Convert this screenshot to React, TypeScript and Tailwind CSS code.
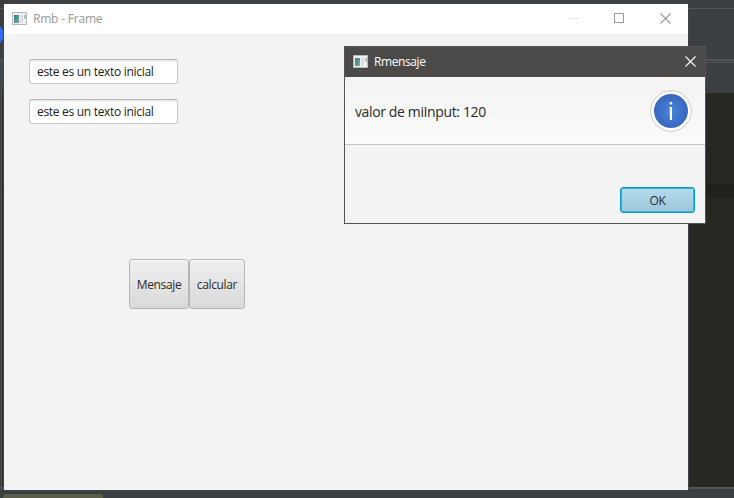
import React from "react";

function AppIcon() {
  return (
    <svg width="15" height="14" viewBox="0 0 15 14" className="shrink-0" shapeRendering="crispEdges">
      <defs>
        <linearGradient id="pane" x1="0" y1="0" x2="1" y2="1">
          <stop offset="0" stopColor="#3f7395" />
          <stop offset="0.55" stopColor="#4f9c8c" />
          <stop offset="1" stopColor="#74b98c" />
        </linearGradient>
      </defs>
      <rect width="15" height="13" fill="#b5b9bd" />
      <rect x="1" y="1" width="13" height="11" fill="#f1f1f3" />
      <rect x="2" y="3" width="5" height="8" fill="url(#pane)" />
      <rect x="8" y="3" width="3" height="8" fill="#dedee2" />
      <rect x="12" y="3" width="2" height="2" fill="#9cc4d4" />
      <rect x="12" y="5" width="2" height="2" fill="#a8d3ae" />
    </svg>
  );
}

function CloseIcon({ color }: { color: string }) {
  return (
    <svg width="11" height="11" viewBox="0 0 11 11" stroke={color} strokeWidth="1.1" className="block shrink-0">
      <path d="M.5 .5 10.5 10.5M10.5 .5 .5 10.5" />
    </svg>
  );
}

function TextField() {
  return (
    <div className="flex h-[25px] w-[149px] items-center rounded-[3px] border border-[#c8c8c8] border-t-[#b9b9b9] bg-white pl-[7px] text-[12px] tracking-[-0.3px] text-[#222] shadow-[inset_0_2px_2px_-1px_#ddd]">
      este es un texto inicial
    </div>
  );
}

function FrameButton({ label, width }: { label: string; width: string }) {
  return (
    <button
      className={`${width} flex h-[50px] items-center justify-center rounded-[3px] border border-[#b5b5b5] bg-linear-to-b from-[#efefef] to-[#d9d9d9] pt-[2px] text-[12px] tracking-[-0.35px] text-[#2b2b2b] shadow-[inset_0_1px_0_#f8f8f8]`}
    >
      {label}
    </button>
  );
}

function Editor() {
  return (
    <div className="flex h-[498px] flex-col bg-[#3c3f41]">
      <div className="h-[8px] shrink-0" />
      <div className="h-px shrink-0 bg-[#555]" />
      <div className="h-[50px] shrink-0" />
      <div className="h-[2px] shrink-0 bg-[#555]" />
      <div className="h-px shrink-0" />
      <div className="h-px shrink-0 bg-[#555]" />
      <div className="flex h-[30px] shrink-0">
        <div className="ml-[1px] w-px bg-[#555]" />
      </div>
      <div className="flex h-[394px] shrink-0">
        <div className="w-px bg-[#3c3f41]" />
        <div className="w-px bg-[#555]" />
        <div className="flex flex-1 flex-col bg-[#272822]">
          <div className="h-[90px]" />
          <div className="h-[15px] bg-[#20201e]" />
        </div>
      </div>
      <div className="h-[2px] shrink-0 bg-[#555]" />
      <div className="h-[5px] shrink-0" />
      <div className="ml-[3px] h-[4px] w-[100px] shrink-0 rounded-t-[3px] bg-[#5a5d4c]" />
    </div>
  );
}

function Dialog() {
  return (
    <div className="absolute left-[344px] top-[46px] flex h-[178px] w-[362px] flex-col border border-[#555453] bg-[#f3f3f3]">
      <div className="flex h-[30px] shrink-0 items-center bg-[#4c4a48] pl-[8px] pr-[9px] text-[12px] tracking-[-0.4px] text-white">
        <AppIcon />
        <span className="ml-[6px] flex-1">Rmensaje</span>
        <div className="pb-[2px]">
          <CloseIcon color="#fff" />
        </div>
      </div>
      <div className="flex h-[68px] shrink-0 items-center justify-between border-b border-[#c6c6c6] bg-linear-to-b from-[#f3f3f3] to-[#fbfbfb] pl-[10px] pr-[13px]">
        <span className="pt-[1px] text-[14px] tracking-[-0.37px] text-[#2b2b2b]">valor de miInput: 120</span>
        <svg width="42" height="42" viewBox="0 0 42 42">
          <defs>
            <radialGradient id="info">
              <stop offset="0" stopColor="#4688d8" />
              <stop offset="1" stopColor="#3966c0" />
            </radialGradient>
          </defs>
          <circle cx="21" cy="21" r="20.3" fill="#fff" stroke="#cacaca" />
          <circle cx="21" cy="21" r="17" fill="url(#info)" />
          <rect x="19.6" y="12" width="2.6" height="2.6" rx=".8" fill="#fff" />
          <path d="M19 17h3v13h-2.2V18H19z" fill="#fff" />
        </svg>
      </div>
      <div className="flex flex-1 items-end justify-end pb-[10px] pr-[10px]">
        <button className="flex h-[26px] w-[75px] items-center justify-center rounded-[3px] border border-[#039ed3] bg-linear-to-b from-[#b3dced] to-[#9cc5d7] pt-[1px] text-[12px] tracking-[-0.3px] text-[#2b2b2b] shadow-[inset_0_0_0_1px_#38b1da]">
          OK
        </button>
      </div>
    </div>
  );
}

export default function App() {
  return (
    <main className="relative h-[498px] w-[734px] overflow-hidden font-['Open_Sans','Noto_Sans',sans-serif]">
      <Editor />
      <div className="absolute -left-[17px] top-[24px] size-[21px] rounded-full bg-[#3369f5]" />
      <section className="absolute left-[4px] top-[4px] flex h-[486px] w-[684px] flex-col bg-[#f3f3f3] shadow-[0_0_0_1px_#434648]">
        <header className="flex h-[30px] shrink-0 items-center bg-white pl-[8px] text-[12px] tracking-[-0.2px] text-[#999]">
          <AppIcon />
          <span className="ml-[6px] flex-1">Rmb - Frame</span>
          <div className="mb-[1px] h-px w-[10px] bg-[#e5e5e5]" />
          <div className="mb-[2px] ml-[35px] size-[10px] border border-[#999]" />
          <div className="ml-[36px] mr-[17px] pb-[2px]">
            <CloseIcon color="#999" />
          </div>
        </header>
        <div className="flex flex-col gap-[15px] pl-[25px] pt-[25px]">
          <TextField />
          <TextField />
        </div>
        <div className="flex pl-[125px] pt-[135px]">
          <FrameButton label="Mensaje" width="w-[60px]" />
          <FrameButton label="calcular" width="w-[56px]" />
        </div>
      </section>
      <Dialog />
    </main>
  );
}
